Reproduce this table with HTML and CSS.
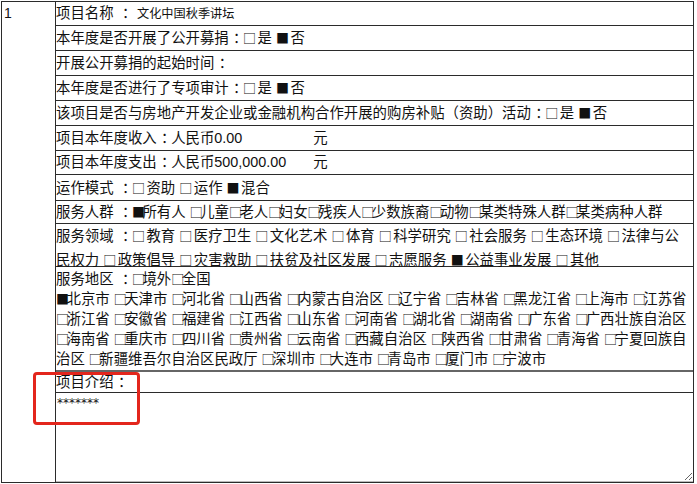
FILE: index.html
```html
<!DOCTYPE html>
<html lang="zh-CN">
<head>
<meta charset="utf-8">
<title>项目信息</title>
<link rel="stylesheet" href="styles.css">
</head>
<body>
<div class="sheet">
  <div class="idx">1</div>
  <div class="rows">
    <div class="row h24">项目名称 <span class="c">：</span><span class="small">文化中国秋季讲坛</span></div>
    <div class="row">本年度是否开展了公开募捐<span class="c">：</span><span class="bx">□</span> 是 <span class="bx">■</span> 否</div>
    <div class="row">开展公开募捐的起始时间<span class="c">：</span></div>
    <div class="row">本年度是否进行了专项审计<span class="c">：</span><span class="bx">□</span> 是 <span class="bx">■</span> 否</div>
    <div class="row">该项目是否与房地产开发企业或金融机构合作开展的购房补贴（资助）活动<span class="c">：</span><span class="bx">□</span> 是 <span class="bx">■</span> 否</div>
    <div class="row">项目本年度收入<span class="c">：</span>人民币<span class="amt">0.00</span>元</div>
    <div class="row h24">项目本年度支出<span class="c">：</span>人民币<span class="amt">500,000.00</span>元</div>
    <div class="row h26">运作模式 <span class="c">：</span><span class="bx">□</span> 资助 <span class="bx">□</span> 运作 <span class="bx">■</span> 混合</div>
    <div class="row h23">服务人群 <span class="c">：</span><span class="bx">■</span>所有人 <span class="bx">□</span>儿童<span class="bx">□</span>老人<span class="bx">□</span>妇女<span class="bx">□</span>残疾人<span class="bx">□</span>少数族裔<span class="bx">□</span>动物<span class="bx">□</span>某类特殊人群<span class="bx">□</span>某类病种人群</div>
    <div class="row multi field">服务领域 <span class="c">：</span><span class="bx">□</span> 教育 <span class="bx">□</span> 医疗卫生 <span class="bx">□</span> 文化艺术 <span class="bx">□</span> 体育 <span class="bx">□</span> 科学研究 <span class="bx">□</span> 社会服务 <span class="bx">□</span> 生态环境 <span class="bx">□</span> 法律与公<br>民权力 <span class="bx">□</span> 政策倡导 <span class="bx">□</span> 灾害救助 <span class="bx">□</span> 扶贫及社区发展 <span class="bx">□</span> 志愿服务 <span class="bx">■</span> 公益事业发展 <span class="bx">□</span> 其他</div>
    <div class="row multi region">服务地区 <span class="c">：</span><span class="bx">□</span>境外<span class="bx">□</span>全国<br><span class="bx">■</span>北京市 <span class="bx">□</span>天津市 <span class="bx">□</span>河北省 <span class="bx">□</span>山西省 <span class="bx">□</span>内蒙古自治区 <span class="bx">□</span>辽宁省 <span class="bx">□</span>吉林省 <span class="bx">□</span>黑龙江省 <span class="bx">□</span>上海市 <span class="bx">□</span>江苏省<br><span class="bx">□</span>浙江省 <span class="bx">□</span>安徽省 <span class="bx">□</span>福建省 <span class="bx">□</span>江西省 <span class="bx">□</span>山东省 <span class="bx">□</span>河南省 <span class="bx">□</span>湖北省 <span class="bx">□</span>湖南省 <span class="bx">□</span>广东省 <span class="bx">□</span>广西壮族自治区<br><span class="bx">□</span>海南省 <span class="bx">□</span>重庆市 <span class="bx">□</span>四川省 <span class="bx">□</span>贵州省 <span class="bx">□</span>云南省 <span class="bx">□</span>西藏自治区 <span class="bx">□</span>陕西省 <span class="bx">□</span>甘肃省 <span class="bx">□</span>青海省 <span class="bx">□</span>宁夏回族自<br>治区 <span class="bx">□</span>新疆维吾尔自治区民政厅 <span class="bx">□</span>深圳市 <span class="bx">□</span>大连市 <span class="bx">□</span>青岛市 <span class="bx">□</span>厦门市 <span class="bx">□</span>宁波市</div>
    <div class="row intro">项目介绍<span class="c">：</span></div>
    <div class="row last"><textarea class="desc">*******</textarea></div>
  </div>
</div>
<div class="mark"></div>
</body>
</html>
```

FILE: styles.css
```css
* {
  box-sizing: border-box;
}

html, body {
  margin: 0;
  background: #fff;
}

body {
  position: relative;
  width: 697px;
  height: 484px;
  overflow: hidden;
  font-family: "Liberation Sans", "Noto Sans CJK SC", sans-serif;
  font-size: 14.4px;
  color: #111;
}

.sheet {
  margin: 1px 0 0 1px;
  width: 693px;
  border: 1px solid #2b2b2b;
  display: grid;
  grid-template-columns: 54px 1fr;
}

.idx {
  border-right: 1px solid #2b2b2b;
  padding: 1px 0 0 2px;
  font-size: 14px;
  line-height: 20px;
}

.rows {
  display: flex;
  flex-direction: column;
}

.row {
  height: 25px;
  line-height: 24px;
  padding-left: 0;
  border-bottom: 1px solid #2b2b2b;
  white-space: nowrap;
}

.row.h23 { height: 23px; line-height: 22px; }
.row.h24 { height: 24px; line-height: 23px; }
.row.h26 { height: 26px; line-height: 25px; }

/* full-width colon, glyph shifted to the middle of its em box */
.c {
  display: inline-block;
  width: 1em;
  text-indent: 0.3em;
}

.small {
  font-size: 12.2px;
  margin-left: 5px;
}

/* checkbox glyphs */
.bx {
  font-family: "Noto Sans CJK SC", sans-serif;
  font-size: 13px;
  letter-spacing: -2.5px;
}

.amt {
  display: inline-block;
  width: 99px;
}

.row.multi {
  white-space: normal;
}

.row.field {
  height: 43px;
  line-height: 23px;
}

.row.region {
  height: 105px;
  line-height: 20px;
  padding-top: 2px;
  border-bottom: 2px solid #666;
}

.row.intro {
  height: 21px;
  line-height: 20px;
}

.row.last {
  height: 89px;
  border-bottom: 0;
}

.desc {
  display: block;
  width: 100%;
  height: 89px;
  margin: 0;
  border: 0;
  border-bottom: 1px solid #bbb;
  padding: 2px 1px;
  font-family: "DejaVu Sans", sans-serif;
  font-size: 12px;
  line-height: 16px;
  color: #111;
  background: #fff;
  outline: none;
}

.mark {
  position: absolute;
  left: 33px;
  top: 372px;
  width: 107px;
  height: 53px;
  border: 3px solid #e3261c;
  border-radius: 4px;
}
```
